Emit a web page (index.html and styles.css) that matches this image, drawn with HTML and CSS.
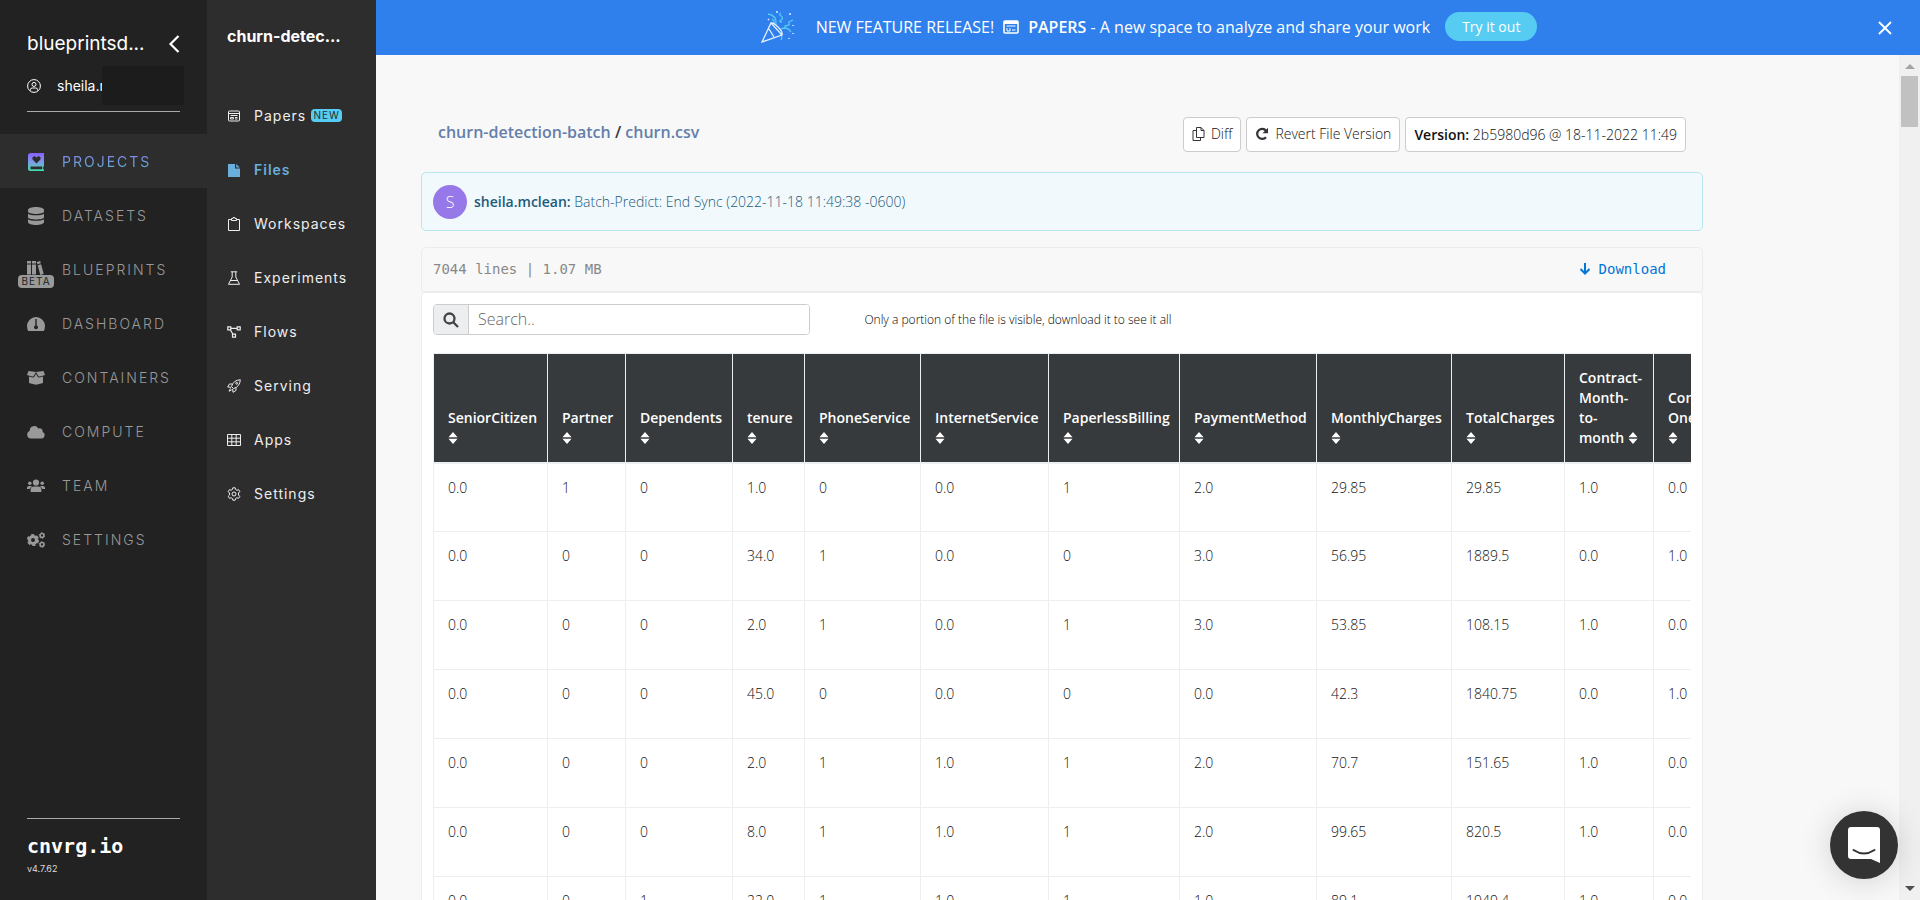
FILE: index.html
```html
<!DOCTYPE html>
<html lang="en">
<head>
<meta charset="utf-8">
<title>churn.csv - cnvrg.io</title>
<link rel="stylesheet" href="styles.css">
</head>
<body>
<svg class="sprite" aria-hidden="true">
  <symbol id="sort" viewBox="0 0 10 14"><path d="M5 1l4.500 5.300H.5zM5 13l4.500-5.300H.5z" fill="currentColor"/></symbol>
</svg>
<div class="app">
  <nav class="side" aria-label="Organization">
    <header class="org">
      <div class="org-row">
        <span class="org-name">blueprintsd...</span>
        <button class="plain" aria-label="Collapse"><svg width="12" height="18" viewBox="0 0 12 18"><path d="M10.500 1L2.500 9l8 8" fill="none" stroke="#fff" stroke-width="2.200"/></svg></button>
      </div>
      <a class="user" href="#">
        <svg width="14" height="14" viewBox="0 0 14 14" fill="none" stroke="currentColor"><circle cx="7" cy="7" r="6.400"/><circle cx="7" cy="5.400" r="2"/><path d="M3.500 11.500v-.8q0-1.700 1.700-1.700h3.600q1.700 0 1.700 1.700v.8"/></svg>
        <span class="user-name">sheila.r<span class="mask"></span></span>
      </a>
    </header>
    <ul class="menu">
      <li><a class="item active" href="#"><svg viewBox="0 0 18 18"><defs><linearGradient id="g" x1="0" y1="0" x2="0" y2="1"><stop offset="0" stop-color="#8b5cff"/><stop offset=".5" stop-color="#7f9be8"/><stop offset="1" stop-color="#3fe0a8"/></linearGradient></defs><path fill="url(#g)" fill-rule="evenodd" d="M3.500 0H17v13.500h-.8v3H17V18H3.500A2.500 2.500 0 0 1 1 15.500v-13A2.500 2.500 0 0 1 3.500 0zM9.500 10.500l3.700-3.700a2 2 0 0 0-3.200-2.700l-.5.500-.5-.5a2 2 0 0 0-3.200 2.700zM3.500 13.500v2.700h11.700v-2.700z"/></svg><span>PROJECTS</span></a></li>
      <li><a class="item" href="#"><svg viewBox="0 0 18 18" fill="currentColor"><path d="M1 3c0-4 16-4 16 0v1.500c0 3.300-16 3.300-16 0zM1 6.800c3 2 13 2 16 0v3.400c0 3-16 3-16 0zM1 12.300c3 2 13 2 16 0V15c0 4-16 4-16 0z"/></svg><span>DATASETS</span></a></li>
      <li><a class="item" href="#"><span class="beta-icon"><svg viewBox="0 0 18 18" fill="currentColor"><path d="M0 0h4v2.500H0zM5 0h4v2.500H5zM0 3.500h4v10H0zM5 3.500h4v10H5zM0 14.500h4V18H0zM5 14.500h4V18H5zM9.800 1l3.400-1 .6 2.300-3.400 1zM10.700 4.300l3.400-1 2.600 9.800-3.400 1zM13.600 15.100l3.400-1 .8 3-3.400.9z"/></svg><span class="beta">BETA</span></span><span>BLUEPRINTS</span></a></li>
      <li><a class="item" href="#"><svg viewBox="0 0 18 18" fill="currentColor"><path fill-rule="evenodd" d="M9 2a9 9 0 0 1 9 9q0 2.500-1.200 5H1.200Q0 13.500 0 11a9 9 0 0 1 9-9zM8.300 4v6.500a2 2 0 1 0 1.400 0V4z"/></svg><span>DASHBOARD</span></a></li>
      <li><a class="item" href="#"><svg viewBox="0 0 18 18" fill="currentColor"><path d="M1.500 2L9 3l-2.500 4.200q-.4.500-1 .3L.5 6.300Q0 6 .2 5.500zM16.500 2L9 3l2.500 4.200q.4.500 1 .3l5-1.200q.5-.3.300-.8zM9 4.800l1.700 3q.5.800 1.400.6l3.900-1v5.800q0 .8-.8 1L9 15.700l-6.200-1.500q-.8-.2-.8-1V7.400l3.900 1q.9.200 1.400-.6z"/></svg><span>CONTAINERS</span></a></li>
      <li><a class="item" href="#"><svg viewBox="0 0 18 18" fill="currentColor"><path d="M4 15.500a4 4 0 0 1-1.300-7.700 4.600 4.600 0 0 1 8.600-2.300 3 3 0 0 1 4.200 3.600A3.300 3.300 0 0 1 14.500 15.500z"/></svg><span>COMPUTE</span></a></li>
      <li><a class="item" href="#"><svg viewBox="0 0 18 18" fill="currentColor"><circle cx="9" cy="5.500" r="3.100"/><circle cx="2.800" cy="6.300" r="1.800"/><circle cx="15.200" cy="6.300" r="1.800"/><path d="M3.600 15v-2q0-3.400 3.400-3.400h4q3.400 0 3.400 3.400v2zM0 12v-1q0-2 2-2h1.700q.8 0 1.300.5-2 1-2.300 2.500zM18 12v-1q0-2-2-2h-1.700q-.8 0-1.300.5 2 1 2.300 2.500z"/></svg><span>TEAM</span></a></li>
      <li><a class="item" href="#"><svg viewBox="0 0 18 18" fill="none" stroke="currentColor"><circle cx="6" cy="9" r="3.500" stroke-width="3"/><circle cx="6" cy="9" r="5.200" stroke-width="1.800" stroke-dasharray="3.200 2.240"/><circle cx="15" cy="4.500" r="1.900" stroke-width="1.500"/><circle cx="15" cy="4.500" r="2.800" stroke-dasharray="1.400 1.530"/><circle cx="15" cy="13.500" r="1.900" stroke-width="1.500"/><circle cx="15" cy="13.500" r="2.800" stroke-dasharray="1.400 1.530"/></svg><span>SETTINGS</span></a></li>
    </ul>
    <footer class="brand"><strong>cnvrg.io</strong><span>v4.7.62</span></footer>
  </nav>

  <nav class="sub" aria-label="Project">
    <h2>churn-detec...</h2>
    <ul class="menu">
      <li><a class="subitem" href="#"><svg viewBox="0 0 14 14" fill="none" stroke="currentColor"><rect x="1.500" y="2" width="11" height="10" rx="1"/><path d="M1.500 4.500h11M3.500 6.500h7M3.500 8.500h3v1.500h-3zM8 8.500h2.500M8 10h2.500"/></svg><span>Papers</span><span class="new">NEW</span></a></li>
      <li><a class="subitem current" href="#"><svg viewBox="0 0 14 14" fill="currentColor"><path d="M1 1h7v4.500h5V14H1zM9.200 1l3.600 3.500H9.200z"/></svg><span>Files</span></a></li>
      <li><a class="subitem" href="#"><svg viewBox="0 0 14 14" fill="none" stroke="currentColor"><path d="M4.500 2.500h-3v11h11v-11h-3M4.500 3.500v-2H6V.6h2v.9h1.500v2z"/></svg><span>Workspaces</span></a></li>
      <li><a class="subitem" href="#"><svg viewBox="0 0 14 14" fill="none" stroke="currentColor"><path d="M3.800.8h6.400M5.200 1v5L1.500 13.300h11L8.800 6V1M3.400 9.500h7.200"/></svg><span>Experiments</span></a></li>
      <li><a class="subitem" href="#"><svg viewBox="0 0 14 14" fill="none" stroke="currentColor" stroke-width="1.200"><path d="M.8 1.800h3v3h-3zM10.200 1.800h3v3h-3zM5.500 9.200h3v3h-3zM3.800 3.300h6.400M3.200 4.800l2.800 4.400"/></svg><span>Flows</span></a></li>
      <li><a class="subitem" href="#"><svg viewBox="0 0 14 14" fill="none" stroke="currentColor"><path d="M4.500 7.500Q6.500 1 13.300.8 13 7.500 6.500 9.600zM5.200 5H2.500L.7 8l3.400.4M9 8.700v2.700L6 13.300l-.4-3.400M3.500 9.500L2 12.200l2.700-1.400"/><circle cx="9.700" cy="4.300" r=".9"/></svg><span>Serving</span></a></li>
      <li><a class="subitem" href="#"><svg viewBox="0 0 14 14" fill="none" stroke="currentColor"><path d="M.5 1.500h13v11H.5zM.5 5.200h13M.5 8.800h13M4.800 1.500v11M9.200 1.500v11"/></svg><span>Apps</span></a></li>
      <li><a class="subitem" href="#"><svg viewBox="0 0 14 14" fill="none" stroke="currentColor"><path d="M5.800.8h2.400l.4 1.700 1.300.7 1.700-.5 1.200 2-1.300 1.300v2l1.300 1.300-1.200 2-1.700-.5-1.300.7-.4 1.700H5.800l-.4-1.700-1.300-.7-1.700.5-1.200-2L2.500 8V6L1.200 4.700l1.200-2 1.700.5 1.300-.7z"/><circle cx="7" cy="7" r="2"/></svg><span>Settings</span></a></li>
    </ul>
  </nav>

  <div class="right">
    <div class="banner">
      <div class="banner-text">
        <svg class="party" width="34" height="34" viewBox="0 0 34 34" fill="none"><g stroke="#56ccf2" stroke-width="1.300"><path d="M7 4q9 1 8 11M11 9q3 2 2 6M20 3q-3 1 0 3t0 4 1 2M32 10l-4 2v3l-4 1v3M20 19q6-3 10 3M19 24q3 3 1 6"/></g><path d="M10 13L21 25 1 32zM10 13q2-1 7 4t4 8M8 19l5 8" stroke="#e5effd" stroke-width="1.300"/><path d="M16 1v2M29 3v2M7 9l1 1M32 15v1M28 28v1M32 23v1" stroke="#e5effd" stroke-width="1.500"/></svg>
        <span>NEW FEATURE RELEASE!</span>
        <svg width="16" height="14" viewBox="0 0 16 14" fill="none"><rect x="1" y="1" width="14" height="12" rx="1" stroke="#fff" stroke-width="1.600"/><path d="M1 2.500h14" stroke="#fff" stroke-width="3"/><path d="M3.500 6h9M4 8v3h3V8M9 10h3.500" stroke="#fff"/></svg>
        <span><strong>PAPERS</strong> - A new space to analyze and share your work</span>
        <button class="try">Try it out</button>
      </div>
      <button class="plain" aria-label="Dismiss"><svg width="14" height="14" viewBox="0 0 14 14"><path d="M1 1l12 12M13 1L1 13" stroke="#fff" stroke-width="1.800"/></svg></button>
    </div>
    <div class="body">
      <main class="content">
        <div class="head">
          <h1><a href="#">churn-detection-batch</a> / <a href="#">churn.csv</a></h1>
          <div class="actions">
            <button class="btn"><svg width="13" height="14" viewBox="0 0 13 14" fill="none" stroke="#333"><path d="M4.500.5H9l3 3v7H4.500zM9 .5v3h3M4.500 3.500H1v10h7.500v-3"/></svg>Diff</button>
            <button class="btn"><svg width="14" height="14" viewBox="0 0 14 14" fill="none"><path d="M11 10.200A5 5 0 1 1 11 3.700" stroke="#333" stroke-width="2.200"/><path d="M13 .8v5.400H7.600z" fill="#333"/></svg>Revert File Version</button>
            <button class="btn version"><span><b>Version:</b> 2b5980d96 @ 18-11-2022 11:49</span></button>
          </div>
        </div>
        <div class="commit"><span class="avatar">S</span><span><b>sheila.mclean:</b> Batch-Predict: End Sync (2022-11-18 11:49:38 -0600)</span></div>
        <div class="filebar"><span>7044 lines | 1.07 MB</span><a href="#"><svg width="12" height="12" viewBox="0 0 12 12" fill="none" stroke="currentColor" stroke-width="2"><path d="M6 0v11M1.500 6L6 10.500 10.500 6"/></svg>Download</a></div>
        <section class="panel">
          <div class="tools">
            <div class="search"><label for="q" aria-label="Search"><svg width="16" height="16" viewBox="0 0 16 16" fill="none" stroke="#444" stroke-width="2.300"><circle cx="6.500" cy="6.500" r="5"/><path d="M10 10l5 5"/></svg></label><input id="q" type="text" placeholder="Search.."></div>
            <span class="note">Only a portion of the file is visible, download it to see it all</span>
          </div>
          <div class="scroll">
            <table>
              <colgroup><col class="w114"><col class="w78"><col class="w107"><col class="w72"><col class="w116"><col class="w128"><col class="w131"><col class="w137"><col class="w135"><col class="w113"><col class="w89"><col class="w107"></colgroup>
              <thead><tr>
                <th>SeniorCitizen <svg><use href="#sort"/></svg></th><th>Partner <svg><use href="#sort"/></svg></th><th>Dependents <svg><use href="#sort"/></svg></th><th>tenure <svg><use href="#sort"/></svg></th><th>PhoneService <svg><use href="#sort"/></svg></th><th>InternetService <svg><use href="#sort"/></svg></th><th>PaperlessBilling <svg><use href="#sort"/></svg></th><th>PaymentMethod <svg><use href="#sort"/></svg></th><th>MonthlyCharges <svg><use href="#sort"/></svg></th><th>TotalCharges <svg><use href="#sort"/></svg></th><th>Contract-Month-to-month&nbsp;<svg><use href="#sort"/></svg></th><th>Contract-OneYear<br><svg><use href="#sort"/></svg></th>
              </tr></thead>
              <tbody>
                <tr><td>0.0</td><td>1</td><td>0</td><td>1.0</td><td>0</td><td>0.0</td><td>1</td><td>2.0</td><td>29.85</td><td>29.85</td><td>1.0</td><td>0.0</td></tr>
                <tr><td>0.0</td><td>0</td><td>0</td><td>34.0</td><td>1</td><td>0.0</td><td>0</td><td>3.0</td><td>56.95</td><td>1889.5</td><td>0.0</td><td>1.0</td></tr>
                <tr><td>0.0</td><td>0</td><td>0</td><td>2.0</td><td>1</td><td>0.0</td><td>1</td><td>3.0</td><td>53.85</td><td>108.15</td><td>1.0</td><td>0.0</td></tr>
                <tr><td>0.0</td><td>0</td><td>0</td><td>45.0</td><td>0</td><td>0.0</td><td>0</td><td>0.0</td><td>42.3</td><td>1840.75</td><td>0.0</td><td>1.0</td></tr>
                <tr><td>0.0</td><td>0</td><td>0</td><td>2.0</td><td>1</td><td>1.0</td><td>1</td><td>2.0</td><td>70.7</td><td>151.65</td><td>1.0</td><td>0.0</td></tr>
                <tr><td>0.0</td><td>0</td><td>0</td><td>8.0</td><td>1</td><td>1.0</td><td>1</td><td>2.0</td><td>99.65</td><td>820.5</td><td>1.0</td><td>0.0</td></tr>
                <tr><td>0.0</td><td>0</td><td>1</td><td>22.0</td><td>1</td><td>1.0</td><td>1</td><td>1.0</td><td>89.1</td><td>1949.4</td><td>1.0</td><td>0.0</td></tr>
              </tbody>
            </table>
          </div>
        </section>
      </main>
      <div class="bar" aria-hidden="true"><i class="up"></i><i class="thumb"></i><i class="down"></i></div>
    </div>
  </div>
</div>
<button class="chat" aria-label="Open chat"><svg width="32" height="36" viewBox="0 0 32 36"><path d="M3 0h26a3 3 0 0 1 3 3v33l-9-4H3a3 3 0 0 1-3-3V3a3 3 0 0 1 3-3z" fill="#fff"/><path d="M5.500 23q10.500 7 21 0" fill="none" stroke="#333" stroke-width="2" stroke-linecap="round"/></svg></button>
</body>
</html>
```
FILE: styles.css
```css
* { box-sizing: border-box; }
body { margin: 0; font: 14px/20px "Open Sans", sans-serif; color: #373a3c; background: #f8f8f8; }
a { text-decoration: none; color: inherit; }
button { font: inherit; color: inherit; cursor: pointer; }
b, strong { font-weight: 600; }
.sprite { position: absolute; width: 0; height: 0; }
.app { display: flex; height: 100vh; overflow: hidden; }
.plain { display: flex; padding: 0; border: 0; background: none; }
.menu { list-style: none; margin: 0; padding: 0; }

.side { display: flex; flex-direction: column; flex: 0 0 207px; background: #222; font-family: Inter, sans-serif; }
.org { margin: 0 27px 22px; padding-top: 30px; height: 112px; border-bottom: 1px solid #aaa; }
.org-row { display: flex; justify-content: space-between; align-items: center; height: 28px; }
.org-name { font-size: 19px; color: #fff; }
.user { display: flex; align-items: center; gap: 16px; height: 56px; color: #fff; }
.user svg { flex: none; }
.user-name { position: relative; }
.mask { position: absolute; left: 45px; top: -10px; width: 82px; height: 39px; background: #1c1c1c; }
.item { display: flex; align-items: center; gap: 17px; height: 54px; padding: 1px 27px 0; color: #999; letter-spacing: 2px; font-weight: 300; }
.item svg { flex: none; width: 18px; height: 18px; display: block; }
.item.active { background: #2d2d2d; font-weight: 400; }
.item.active > span { color: transparent; background: linear-gradient(#8a7ff0, #56b9cc); background-size: 100% 20px; -webkit-background-clip: text; background-clip: text; }
.beta-icon { position: relative; }
.beta { position: absolute; left: -9px; top: 14px; width: 36px; height: 13px; border-radius: 4px; background: #999; color: #222; font: 400 10px/13px Inter, sans-serif; letter-spacing: 1px; text-align: center; }
.brand { display: flex; flex-direction: column; margin: auto 27px 21px; padding-top: 14px; border-top: 1px solid #aaa; color: #ddd; font-size: 9px; }
.brand strong { font: bold 20px/26px "DejaVu Sans Mono", monospace; color: #fff; }

.sub { flex: 0 0 169px; background: #2d2d2d; font-family: Inter, sans-serif; color: #eee; }
.sub h2 { margin: 26px 20px 42px; font-size: 16px; line-height: 20px; font-weight: 700; color: #fff; }
.subitem { display: flex; align-items: center; height: 54px; padding: 1px 0 0 20px; letter-spacing: 1px; font-weight: 400; }
.subitem svg { width: 14px; height: 14px; margin-right: 13px; flex: none; }
.current { color: #6bb0dc; font-weight: 600; }
.new { margin-left: 5px; width: 31px; border-radius: 4px; background: #56ccf2; color: #2d2d2d; font-size: 10px; line-height: 13px; text-align: center; }

.right { flex: 1; min-width: 0; display: flex; flex-direction: column; }
.banner { display: flex; align-items: center; flex: 0 0 55px; padding-right: 28px; background: #2f80ed; color: #fff; font-size: 16px; }
.banner-text { flex: 1; display: flex; justify-content: center; align-items: center; gap: 9px; padding: 0 0 2px 44px; }
.party { margin-right: 12px; }
.try { height: 29px; margin-left: 6px; padding: 0 17px; border: 0; border-radius: 15px; background: #56ccf2; color: #fff; font-size: 14px; }

.body { flex: 1; min-height: 0; display: flex; }
.content { flex: 1; min-width: 0; padding: 62px 196px 0 45px; overflow: hidden; }
.head { display: flex; justify-content: space-between; align-items: flex-start; height: 55px; padding: 0 17px; }
h1 { margin: 4px 0 0; font-size: 16px; line-height: 22px; font-weight: 600; }
h1 a { color: #647fa9; }
.actions { display: flex; gap: 5px; }
.btn { display: flex; align-items: center; gap: 6px; height: 35px; padding: 0 8px 2px; border: 1px solid #ccc; border-radius: 4px; background: #fff; color: #111; font-weight: 300; }
.version { padding-bottom: 0; }
.commit { display: flex; align-items: center; gap: 7px; height: 59px; padding: 0 11px; border: 1px solid #b8e6ef; border-radius: 5px; background: #f1f9fd; color: #1c5b7a; font-weight: 300; }
.avatar { width: 34px; border-radius: 50%; background: #9778e8; color: #fff; font-size: 16px; line-height: 34px; text-align: center; }
.filebar { display: flex; justify-content: space-between; align-items: center; height: 45px; margin-top: 16px; padding: 0 36px 2px 11px; border: 1px solid #ececec; border-radius: 5px 5px 0 0; color: #888; font-family: "DejaVu Sans Mono", monospace; }
.filebar a { display: flex; align-items: center; gap: 8px; color: #0275d8; }
.panel { padding: 11px; border: 1px solid #ececec; border-radius: 5px 5px 0 0; background: #fff; }
.tools { display: flex; align-items: center; gap: 54px; margin-bottom: 18px; }
.search { display: flex; width: 30%; height: 31px; border: 1px solid #ccc; border-radius: 4px; overflow: hidden; }
.search label { display: flex; align-items: center; justify-content: center; width: 35px; background: #eceeef; border-right: 1px solid #ccc; }
.search input { flex: 1; min-width: 0; border: 0; padding: 0 9px 2px; font: 300 16px "Open Sans", sans-serif; color: #555; }
.search input::placeholder { color: #666; }
.note { font-size: 12px; font-weight: 300; color: #000; }
.scroll { overflow: hidden; }
table { border-collapse: collapse; table-layout: fixed; width: 1327px; }
th, td { border: 1px solid #eceeef; padding: 14px 8px 14px 14px; text-align: left; }
th { height: 109px; padding-top: 12px; vertical-align: bottom; background: #373a3c; color: #fff; font-weight: 600; border-bottom-width: 2px; }
td { height: 69px; vertical-align: top; color: #111; font-weight: 300; }
th svg { width: 10px; height: 14px; vertical-align: -2px; }
.w72 { width: 72px; } .w78 { width: 78px; } .w89 { width: 89px; } .w107 { width: 107px; } .w113 { width: 113px; } .w114 { width: 114px; } .w116 { width: 116px; } .w128 { width: 128px; } .w131 { width: 131px; } .w135 { width: 135px; } .w137 { width: 137px; }

.bar { flex: 0 0 21px; display: flex; flex-direction: column; align-items: center; padding: 9px 0; background: #f0f0f0; }
.up, .down { border: 5px solid transparent; border-top: 0; border-bottom-color: #a3a3a3; }
.thumb { width: 17px; height: 51px; margin-top: 7px; background: #c1c1c1; }
.down { margin-top: auto; border-top: 5px solid #505050; border-bottom: 0; }
.chat { position: fixed; right: 22px; bottom: 21px; width: 68px; height: 68px; display: flex; align-items: center; justify-content: center; border: 0; border-radius: 50%; background: #333; box-shadow: 0 2px 32px rgba(0, 0, 0, .16); }
```
